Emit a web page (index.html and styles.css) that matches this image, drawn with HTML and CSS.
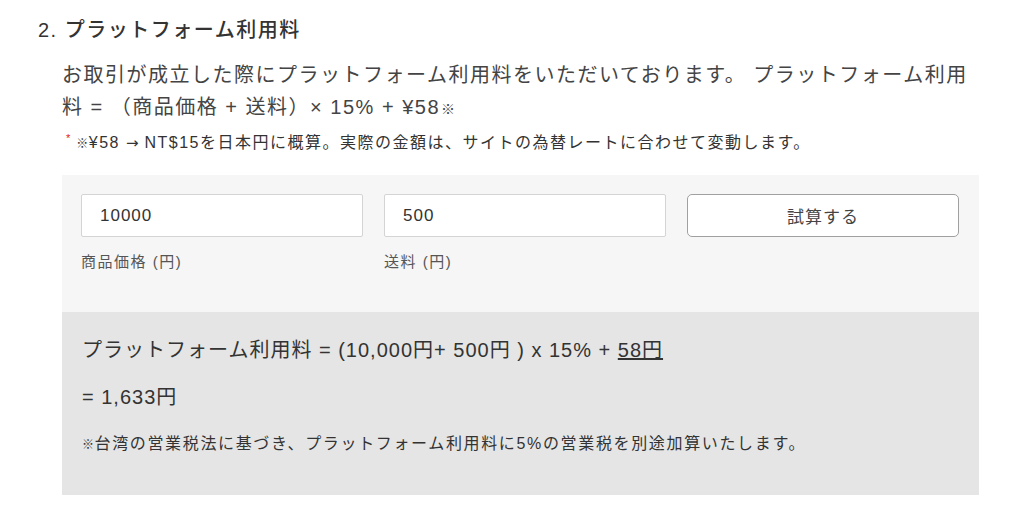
FILE: index.html
```html
<!DOCTYPE html>
<html lang="ja">
<head>
<meta charset="utf-8">
<link rel="stylesheet" href="styles.css">
</head>
<body>
<section class="fee">
  <h2 class="fee-title">2. プラットフォーム利用料</h2>
  <div class="fee-body">
    <p class="fee-desc">お取引が成立した際にプラットフォーム利用料をいただいております。 プラットフォーム利用料 = （商品価格 + 送料）× 15% + ¥58<span class="kome">※</span></p>
    <p class="fee-note"><span class="req">*</span> <span class="kome-s">※</span>¥58 <span class="arrow">→</span> NT$15を日本円に概算。実際の金額は、サイトの為替レートに合わせて変動します。</p>
    <div class="calc">
      <div class="calc-form">
        <div class="field">
          <input class="input" type="text" value="10000">
          <label class="label">商品価格 (円)</label>
        </div>
        <div class="field">
          <input class="input" type="text" value="500">
          <label class="label">送料 (円)</label>
        </div>
        <div class="field">
          <button class="btn" type="button">試算する</button>
        </div>
      </div>
      <div class="calc-result">
        <p class="res-line">プラットフォーム利用料 = (10,000円+ 500円 ) x 15% + <span class="u">58円</span></p>
        <p class="res-line">= 1,633円</p>
        <p class="res-note"><span class="kome-s">※</span>台湾の営業税法に基づき、プラットフォーム利用料に5%の営業税を別途加算いたします。</p>
      </div>
    </div>
  </div>
</section>
</body>
</html>
```

FILE: styles.css
```css
* { box-sizing: border-box; }
html, body { margin: 0; padding: 0; background: #fff; }
body {
  font-family: "Liberation Sans", "Noto Sans CJK JP", sans-serif;
  color: #333;
}
.fee { padding: 0 0 0 38px; width: 980px; }
.fee-title {
  margin: 16px 0 0;
  font-size: 20px;
  line-height: 28px;
  font-weight: 500;
  letter-spacing: 1.5px;
  color: #333;
}
.fee-body { padding-left: 24px; }
.fee-desc {
  margin: 15px 0 0;
  font-size: 20px;
  line-height: 32px;
  letter-spacing: 1.5px;
  color: #444;
}
.kome { font-size: 14px; margin-left: 1px; letter-spacing: 0; }
.fee-note {
  margin: 8px 0 0;
  font-size: 16px;
  line-height: 20px;
  letter-spacing: 1.5px;
  color: #333;
}
.req { color: #e02020; font-size: 11px; vertical-align: super; line-height: 0; margin-left: 4px; letter-spacing: 0; }
.kome-s { font-size: 12px; letter-spacing: 0.5px; }
.arrow { font-family: "DejaVu Sans", sans-serif; font-size: 15px; letter-spacing: 0; }
.calc { margin-top: 21px; width: 917px; }
.calc-form {
  background: #f6f6f6;
  padding: 19px 20px 0 19px;
  height: 137px;
  display: grid;
  grid-template-columns: 282px 282px 272px;
  column-gap: 21px;
  align-items: start;
}
.field { display: flex; flex-direction: column; }
.input {
  height: 43px;
  border: 1px solid #d4d4d4;
  border-radius: 2px;
  background: #fff;
  padding: 0 18px;
  font-family: "Liberation Sans", "Noto Sans CJK JP", sans-serif;
  font-size: 17px;
  letter-spacing: 1px;
  color: #333;
  outline: none;
}
.label {
  margin-top: 14px;
  font-size: 15px;
  line-height: 22px;
  letter-spacing: 1.5px;
  color: #555;
}
.btn {
  height: 43px;
  border: 1px solid #a0a0a0;
  border-radius: 5px;
  background: #fff;
  font-family: "Liberation Sans", "Noto Sans CJK JP", sans-serif;
  font-size: 17px;
  letter-spacing: 1px;
  color: #444;
}
.calc-result {
  background: #e5e5e5;
  padding: 22px 20px 0 20px;
  height: 183px;
}
.res-line {
  margin: 0 0 15px;
  font-size: 20px;
  line-height: 32px;
  color: #333;
  letter-spacing: 1px;
}
.u { text-decoration: underline; }
.res-note {
  margin: 19px 0 0;
  font-size: 16px;
  line-height: 24px;
  letter-spacing: 1.65px;
  color: #333;
}
```
